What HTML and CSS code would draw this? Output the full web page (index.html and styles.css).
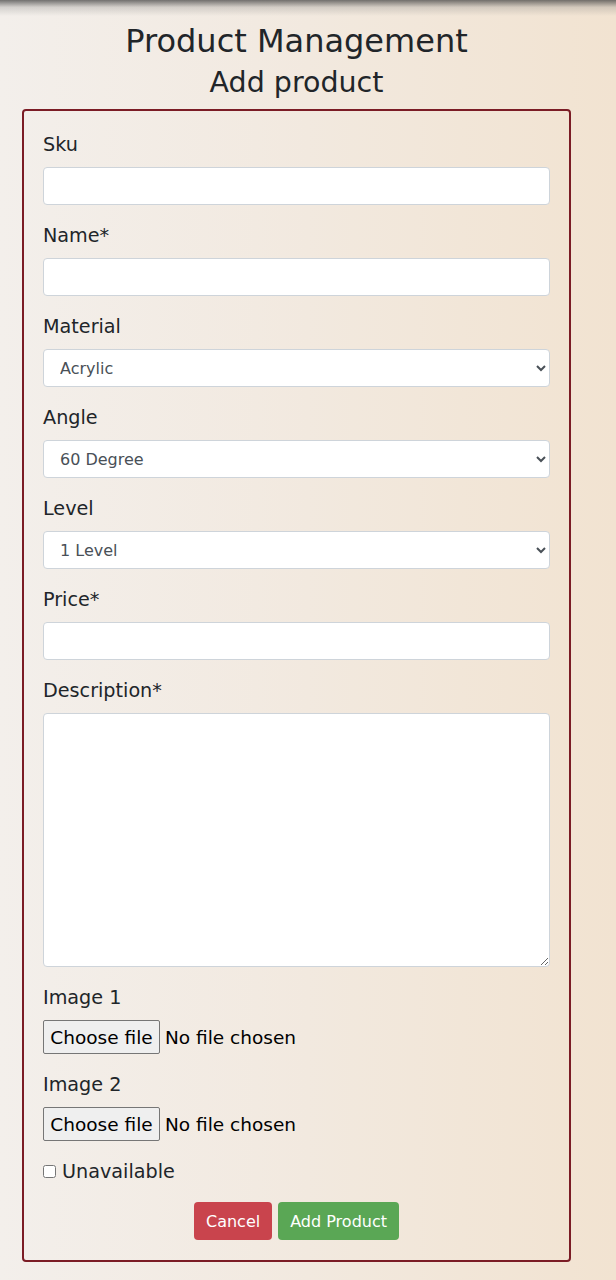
FILE: index.html
```html
<!DOCTYPE html>
<html lang="en">
<head>
<meta charset="utf-8">
<title>Product Management</title>
<link rel="stylesheet" href="styles.css">
</head>
<body>
<div class="topshadow"></div>
<main class="page">
  <h1 class="title">Product Management</h1>
  <h2 class="subtitle">Add product</h2>
  <form class="card">
    <div class="group">
      <label class="label" for="sku">Sku</label>
      <input class="control" id="sku" type="text">
    </div>
    <div class="group">
      <label class="label" for="name">Name*</label>
      <input class="control" id="name" type="text">
    </div>
    <div class="group">
      <label class="label" for="material">Material</label>
      <select class="control select" id="material"><option>Acrylic</option></select>
    </div>
    <div class="group">
      <label class="label" for="angle">Angle</label>
      <select class="control select" id="angle"><option>60 Degree</option></select>
    </div>
    <div class="group">
      <label class="label" for="level">Level</label>
      <select class="control select" id="level"><option>1 Level</option></select>
    </div>
    <div class="group">
      <label class="label" for="price">Price*</label>
      <input class="control" id="price" type="text">
    </div>
    <div class="group">
      <label class="label" for="desc">Description*</label>
      <textarea class="control area" id="desc"></textarea>
    </div>
    <div class="group">
      <span class="label">Image 1</span>
      <div class="file-row">
        <input class="file-input" id="img1" type="file">
        <label class="file-btn" for="img1">Choose file</label>
        <span class="file-name">No file chosen</span>
      </div>
    </div>
    <div class="group">
      <span class="label">Image 2</span>
      <div class="file-row">
        <input class="file-input" id="img2" type="file">
        <label class="file-btn" for="img2">Choose file</label>
        <span class="file-name">No file chosen</span>
      </div>
    </div>
    <div class="group check">
      <input class="checkbox" id="unavail" type="checkbox">
      <label class="check-label" for="unavail">Unavailable</label>
    </div>
    <div class="actions">
      <button type="button" class="btn btn-cancel">Cancel</button>
      <button type="submit" class="btn btn-add">Add Product</button>
    </div>
  </form>
</main>
</body>
</html>
```
FILE: styles.css
```css
html, body {
  margin: 0;
  padding: 0;
}
body {
  min-height: 1280px;
  background: linear-gradient(to right, #f3efeb 0%, #f2e9df 50%, #f2e3d1 100%);
  font-family: "DejaVu Sans", "Noto Sans", sans-serif;
  color: #212529;
}
.topshadow {
  height: 16px;
  background: linear-gradient(to bottom, rgba(70,70,70,0.75), rgba(120,120,120,0.25) 45%, rgba(200,200,200,0));
  margin-bottom: -16px;
}
.page {
  padding: 0 45px 0 22px;
  display: flex;
  flex-direction: column;
}
.title {
  margin: 22px 0 0;
  font-size: 32px;
  font-weight: 400;
  line-height: 38px;
  text-align: center;
}
.subtitle {
  margin: 7px 0 10px;
  font-size: 28.5px;
  font-weight: 400;
  line-height: 32px;
  text-align: center;
}
.card {
  border: 2px solid #7b1c25;
  border-radius: 4px;
  padding: 19px 19px 20px;
  display: flex;
  flex-direction: column;
  gap: 16px;
}
.group {
  display: flex;
  flex-direction: column;
  gap: 8px;
}
.label {
  font-size: 19.2px;
  line-height: 29px;
}
.control {
  box-sizing: border-box;
  height: 38px;
  width: 100%;
  border: 1px solid #ced4da;
  border-radius: 4px;
  background: #fff;
  padding: 6px 12px;
  font-family: inherit;
  font-size: 16px;
  color: #495057;
}
.area {
  height: 254px;
  resize: vertical;
}
.file-row {
  display: flex;
  align-items: center;
  gap: 5px;
  height: 34px;
}
.file-input {
  display: none;
}
.file-btn {
  box-sizing: border-box;
  height: 34px;
  width: 117px;
  display: flex;
  align-items: center;
  justify-content: center;
  background: #efefef;
  border: 1px solid #767676;
  border-radius: 2px;
  font-size: 18.5px;
  color: #000;
}
.file-name {
  font-size: 18.5px;
  color: #000;
}
.check {
  flex-direction: row;
  align-items: center;
  gap: 6px;
}
.checkbox {
  margin: 0;
  width: 13px;
  height: 13px;
}
.check-label {
  font-size: 19.2px;
  line-height: 29px;
}
.actions {
  display: flex;
  justify-content: center;
  gap: 6px;
}
.btn {
  border: 0;
  border-radius: 4px;
  height: 38px;
  padding: 0 12px;
  font-family: inherit;
  font-size: 16px;
  color: #fff;
}
.btn-cancel {
  background: #c9444d;
}
.btn-add {
  background: #5aa755;
}
```
